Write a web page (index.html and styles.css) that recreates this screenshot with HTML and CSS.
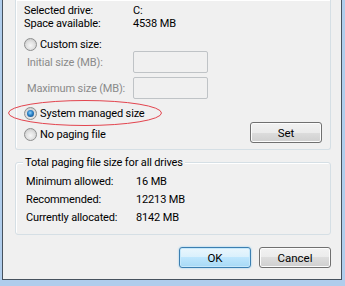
FILE: index.html
```html
<!DOCTYPE html>
<html lang="en">
<head>
  <meta charset="UTF-8">
  <title>Virtual Memory</title>
  <link rel="stylesheet" href="styles.css">
</head>
<body>

<div class="frame">
  <div class="group top-group">
    <div class="info-row"><span class="lbl">Selected drive:</span><span>C:</span></div>
    <div class="info-row"><span class="lbl">Space available:</span><span>4538 MB</span></div>

    <div class="radio-row custom"><span class="radio"></span>Custom size:</div>
    <div class="size-row first"><span class="lbl dim">Initial size (MB):</span><span class="textbox"></span></div>
    <div class="size-row"><span class="lbl dim">Maximum size (MB):</span><span class="textbox"></span></div>

    <div class="radio-row managed">
      <span class="radio checked"></span>System managed size
      <svg class="circled" width="156" height="28" viewBox="0 0 156 28">
        <ellipse cx="78" cy="14" rx="76.5" ry="12.5" fill="none" stroke="#e3444e" stroke-width="1"/>
      </svg>
    </div>
    <div class="last-row">
      <div class="radio-line"><span class="radio"></span>No paging file</div>
      <button class="btn">Set</button>
    </div>
  </div>

  <div class="group total-group">
    <div class="legend">Total paging file size for all drives</div>
    <div class="info-row"><span class="lbl">Minimum allowed:</span><span>16 MB</span></div>
    <div class="info-row"><span class="lbl">Recommended:</span><span>12213 MB</span></div>
    <div class="info-row"><span class="lbl">Currently allocated:</span><span>8142 MB</span></div>
  </div>

  <div class="buttons">
    <button class="btn default">OK</button>
    <button class="btn">Cancel</button>
  </div>
</div>

</body>
</html>
```

FILE: styles.css
```css
* { box-sizing: border-box; }
body {
  margin: 0;
  background: #b0cdec; /* aero frame */
  font-family: Roboto, 'Open Sans', sans-serif;
  font-size: 11px;
  letter-spacing: -0.15px;
  color: #000;
  overflow: hidden;
}
.frame {
  margin: 0 3px 0 2px;
  height: 280px;
  background: #f0f0f0;
  border: 1px solid #47525e;
  border-top: none;
  padding: 0 10px 0 12px;
}

.group {
  border: 1px solid #d5dfe5;
  border-radius: 3px;
  box-shadow: inset 1px 1px 0 #fff;
}
.top-group {
  border-top: none;
  border-radius: 0 0 3px 3px;
  padding: 4px 8px 6px 8px;
  height: 150px;
}

.info-row {
  display: flex;
  height: 13px;
  line-height: 13px;
  white-space: nowrap;
}
.info-row .lbl { width: 109px; }

.radio-row, .radio-line {
  display: flex;
  align-items: center;
  height: 13px;
  white-space: nowrap;
}
.radio-row.custom { margin-top: 8px; }
.radio-row.managed { margin-top: 7px; height: 14px; position: relative; }
.radio {
  width: 13px;
  height: 13px;
  border-radius: 50%;
  border: 1px solid #8e8f8f;
  background: radial-gradient(circle at 50% 60%, #f6f6f6 0, #e2e2e2 45%, #cfcfcf 75%, #eeeeee 100%);
  margin-right: 3px;
  flex-shrink: 0;
  display: inline-flex;
  align-items: center;
  justify-content: center;
}
.radio.checked::after {
  content: "";
  width: 7px;
  height: 7px;
  border-radius: 50%;
  background: radial-gradient(circle at 45% 40%, #8fd3ff 0, #2a7fc4 45%, #0d3f78 100%);
}
.circled {
  position: absolute;
  left: -17px;
  top: -7px;
  pointer-events: none;
}

.size-row {
  display: flex;
  align-items: center;
  height: 22px;
  margin-top: 4px;
  padding-left: 3px;
  white-space: nowrap;
}
.size-row.first { margin-top: 0; }
.size-row .lbl { width: 106px; }
.dim { color: #8a8a8a; }
.textbox {
  width: 75px;
  height: 22px;
  border: 1px solid #bfc3c6;
  border-radius: 2px;
  background: #f0f0f0;
}

.last-row {
  display: flex;
  justify-content: space-between;
  align-items: center;
  height: 21px;
  margin-top: 2px;
}
.last-row .radio-line { margin-top: 3px; }

.btn {
  font-family: inherit;
  font-size: 11.5px;
  color: #000;
  width: 72px;
  height: 21px;
  padding: 0;
  border: 1px solid #707070;
  border-radius: 3px;
  background: linear-gradient(#f2f2f2 0, #ebebeb 50%, #dddddd 50%, #cfcfcf 100%);
  box-shadow: inset 0 0 0 1px #fcfcfc;
}
.btn.default {
  border-color: #3c7fb1;
  background: linear-gradient(#eaf6fd 0, #d9f0fc 50%, #bee6fd 50%, #a7d9f5 100%);
  box-shadow: inset 0 0 0 1px #c5e8fb, 0 0 2px #7fc4ee;
}

.total-group {
  margin-top: 12px;
  height: 73px;
  padding: 0 0 0 10px;
}
.legend {
  width: fit-content;
  margin: -7px 0 4px -3px;
  padding: 0 2px;
  background: #f0f0f0;
  line-height: 13px;
  white-space: nowrap;
}
.total-group .info-row { height: 18px; line-height: 18px; }
.total-group .info-row .lbl { width: 110px; }

.buttons {
  display: flex;
  justify-content: flex-end;
  gap: 8px;
  margin-top: 12px;
}
```
